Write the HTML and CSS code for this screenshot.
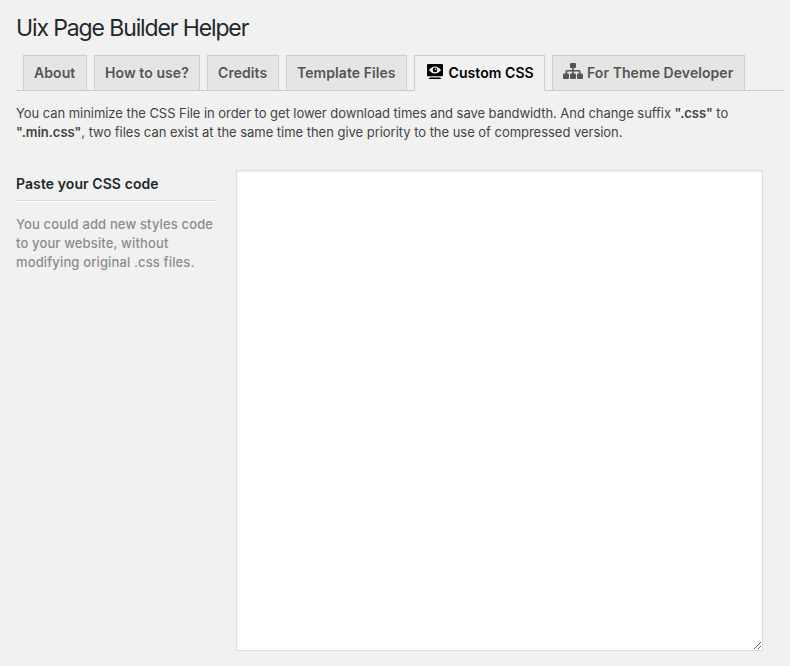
FILE: index.html
```html
<!DOCTYPE html>
<html lang="en">
<head>
<meta charset="utf-8">
<title>Uix Page Builder Helper</title>
<link rel="stylesheet" href="styles.css">
</head>
<body>
<main class="wrap">
  <h1 class="title">Uix Page Builder Helper</h1>
  <nav class="tabs">
    <a class="tab tab-about"><span>About</span></a>
    <a class="tab tab-usage"><span>How to use?</span></a>
    <a class="tab tab-credits"><span>Credits</span></a>
    <a class="tab tab-templates"><span>Template Files</span></a>
    <a class="tab tab-css active">
      <svg class="icon-view" width="16" height="16" viewBox="0 0 16 16"><path fill-rule="evenodd" d="M1 0h14q1 0 1 1v10.300q0 1-1 1H1q-1 0-1-1V1q0-1 1-1zM2 6.200Q4.600 2.600 8 2.600T14 6.200Q11.400 9.400 8 9.400T2 6.200z"/><circle cx="8" cy="5.900" r="2.300"/><circle cx="8.500" cy="5.200" r=".8" fill="#fff"/><path d="M3 13.500h10l1.500 1.500h-13z"/></svg>
      <span>Custom CSS</span>
    </a>
    <a class="tab tab-dev">
      <svg class="icon-sitemap" width="20" height="16" viewBox="0 0 20 16"><rect x="7" width="6" height="5" rx="1"/><path d="M9.200 4h1.600v3H16q1.500 0 1.500 1.500V11h-1.600V8.600h-5.100V11H9.200V8.600H4.100V11H2.500V8.500Q2.500 7 4 7h5.200z"/><rect y="10.500" width="6" height="5.500" rx="1"/><rect x="7" y="10.500" width="6" height="5.500" rx="1"/><rect x="14" y="10.500" width="6" height="5.500" rx="1"/></svg>
      <span>For Theme Developer</span>
    </a>
  </nav>
  <p class="intro"><span class="line-one">You can minimize the CSS File in order to get lower download times and save bandwidth. And change suffix <b>".css"</b> to</span><br><span class="line-two"><b>".min.css"</b>, two files can exist at the same time then give priority to the use of compressed version.</span></p>
  <section class="field">
    <div class="label">
      <h2 class="label-title">Paste your CSS code</h2>
      <p class="label-help">You could add new styles code<br>to your website, without<br>modifying original .css files.</p>
    </div>
    <textarea class="code" aria-label="CSS code"></textarea>
  </section>
</main>
</body>
</html>
```
FILE: styles.css
```css
* { box-sizing: border-box; }
body {
  margin: 0;
  background: #f1f1f1;
  color: #444;
  font: 13px/19px Inter, sans-serif;
  overflow: hidden;
}
.wrap { padding: 13px 6px 0 16px; }
.title {
  margin: 0;
  color: #23282d;
  font-size: 23px;
  font-weight: 400;
  line-height: 30px;
  letter-spacing: -1.12px;
}
.tabs {
  display: flex;
  gap: 7px;
  height: 36px;
  margin-top: 12px;
  padding-left: 7px;
  border-bottom: 1px solid #ccc;
}
.tab {
  display: flex;
  height: 36px;
  padding: 5px 10px 6px;
  border: 1px solid #ccc;
  background: #e5e5e5;
  color: #555;
  font-size: 14px;
  font-weight: 600;
  line-height: 24px;
  letter-spacing: 0.07px;
  white-space: nowrap;
}
.tab svg { flex: none; fill: currentColor; }
.tab.active { background: #f1f1f1; border-bottom-color: #f1f1f1; color: #000; }
.tab-about { width: 64px; }
.tab-usage { width: 106px; }
.tab-credits { width: 72px; }
.tab-templates { width: 121px; }
.tab-css { width: 131px; }
.tab-dev { width: 193px; }
.icon-view { margin: 3px 5.500px 0 2px; }
.icon-sitemap { margin: 2px 4px 0 0; }
.intro { margin: 13px 0 0; white-space: nowrap; }
.intro b { font-weight: 600; }
.line-one { letter-spacing: -0.05px; }
.line-two { letter-spacing: -0.03px; }
.field { display: flex; gap: 20px; margin-top: 28px; }
.label { width: 200px; }
.label-title {
  height: 31px;
  margin: 0;
  padding-top: 4px;
  border-bottom: 1px solid #ddd;
  box-shadow: 0 1px 0 #fff;
  color: #23282d;
  font-size: 14px;
  font-weight: 600;
  line-height: 20px;
  letter-spacing: 0.08px;
}
.label-help {
  margin: 14px 0 0;
  color: #8c8c8c;
  font-weight: 500;
  letter-spacing: 0.14px;
  white-space: nowrap;
}
.code {
  display: block;
  width: 527px;
  height: 481px;
  margin: 0;
  padding: 6px;
  border: 1px solid #ddd;
  background: #fff;
  box-shadow: inset 0 1px 2px rgba(0, 0, 0, .07);
  outline: none;
  resize: both;
}
```
